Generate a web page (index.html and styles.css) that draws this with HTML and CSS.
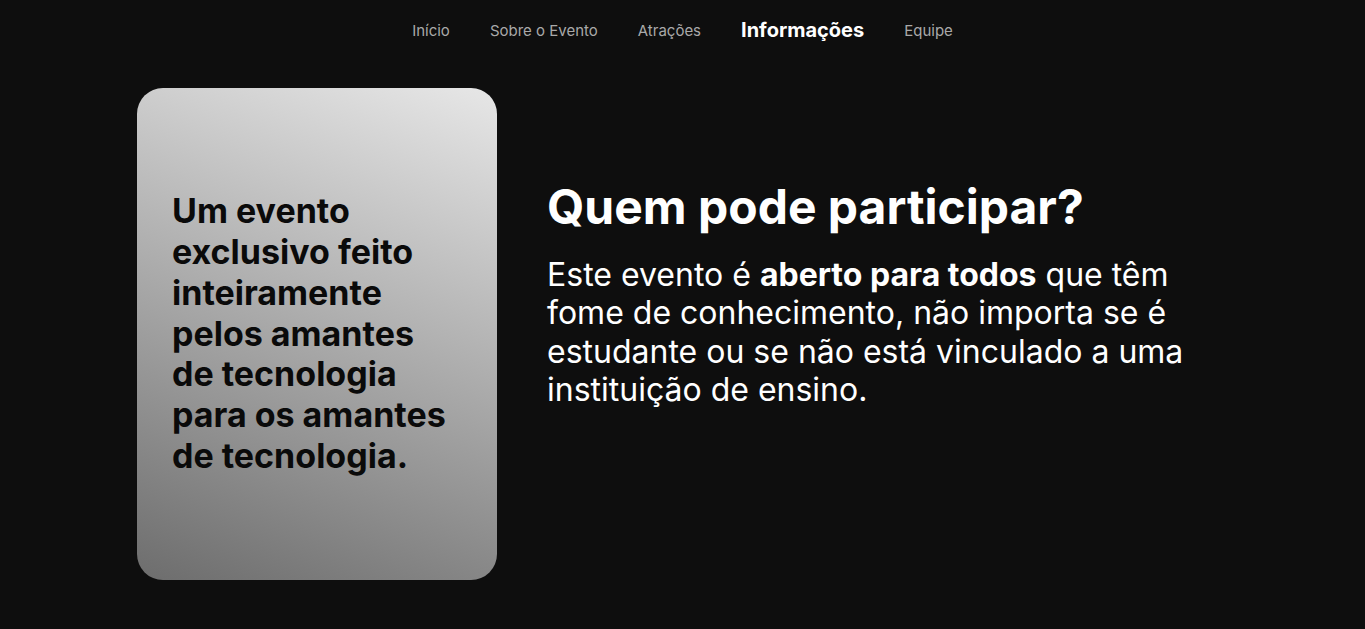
FILE: index.html
```html
<!DOCTYPE html>
<html lang="pt-BR">
<head>
<meta charset="utf-8">
<title>Informações</title>
<link rel="stylesheet" href="styles.css">
</head>
<body>
<header class="topbar">
  <nav class="nav">
    <a class="nav-link" href="#">Início</a>
    <a class="nav-link" href="#">Sobre o Evento</a>
    <a class="nav-link" href="#">Atrações</a>
    <a class="nav-link active" href="#">Informações</a>
    <a class="nav-link" href="#">Equipe</a>
  </nav>
</header>
<main class="info">
  <div class="card">
    <p class="card-text">Um evento exclusivo feito inteiramente pelos amantes de tecnologia para os amantes de tecnologia.</p>
  </div>
  <section class="details">
    <h1 class="title">Quem pode participar?</h1>
    <p class="lead">Este evento é <strong>aberto para todos</strong> que têm fome de conhecimento, não importa se é estudante ou se não está vinculado a uma instituição de ensino.</p>
  </section>
</main>
</body>
</html>
```
FILE: styles.css
```css
* { box-sizing: border-box; }
html, body { margin: 0; padding: 0; }
body {
  background: #0e0e0e;
  color: #fff;
  font-family: Inter, "Noto Sans", sans-serif;
  min-height: 629px;
}
.topbar {
  display: flex;
  justify-content: center;
  padding-top: 18px;
  height: 88px;
}
.nav {
  display: flex;
  align-items: center;
  gap: 40px;
  height: 24px;
}
.nav-link {
  color: #a9a9a9;
  text-decoration: none;
  font-size: 15px;
}
.nav-link.active {
  color: #fff;
  font-weight: 700;
  font-size: 20px;
}
.info {
  width: 1091px;
  margin: 0 auto;
  display: flex;
  gap: 50px;
}
.card {
  flex: 0 0 360px;
  height: 492px;
  border-radius: 26px;
  background: linear-gradient(200deg, #e7e7e7 0%, #6d6d6d 100%);
  display: flex;
  align-items: center;
  padding: 0 35px;
}
.card-text {
  margin: 0;
  color: #0a0a0a;
  font-size: 34px;
  font-weight: 700;
  line-height: 1.2;
}
.details {
  flex: 1;
  padding-top: 90px;
}
.title {
  margin: 0;
  font-size: 48px;
  font-weight: 700;
  line-height: 58px;
}
.lead {
  margin: 20px 0 0;
  font-size: 32px;
  line-height: 1.2;
  font-weight: 400;
  max-width: 660px;
}
.lead strong { font-weight: 700; }
```
